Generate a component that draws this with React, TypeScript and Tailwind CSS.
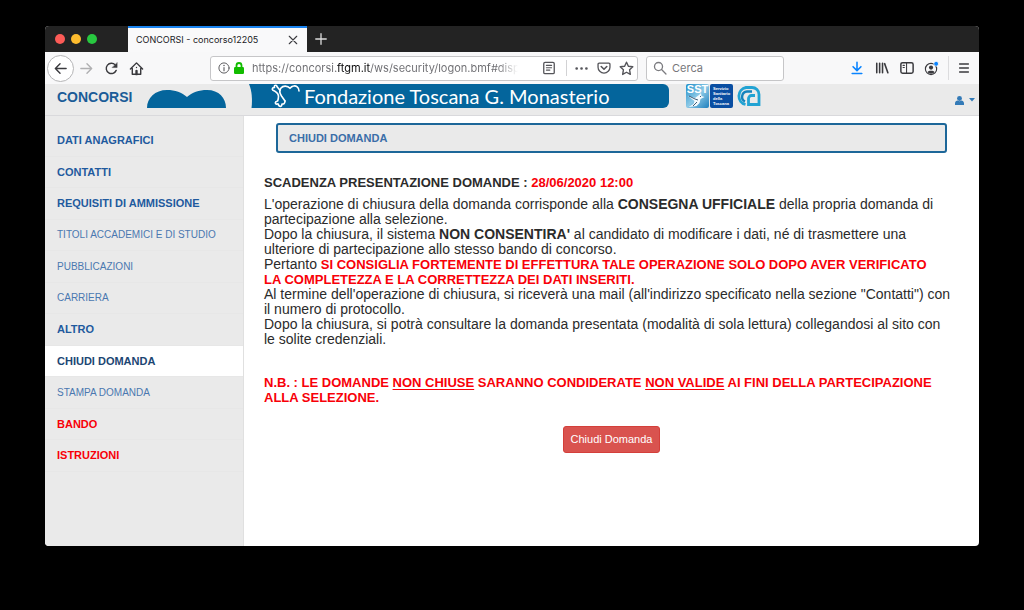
import type { ReactNode } from "react";

type MenuItem = {
  label: string;
  tone: "strong" | "plain" | "active" | "alert";
};

const MENU: MenuItem[] = [
  { label: "DATI ANAGRAFICI", tone: "strong" },
  { label: "CONTATTI", tone: "strong" },
  { label: "REQUISITI DI AMMISSIONE", tone: "strong" },
  { label: "TITOLI ACCADEMICI E DI STUDIO", tone: "plain" },
  { label: "PUBBLICAZIONI", tone: "plain" },
  { label: "CARRIERA", tone: "plain" },
  { label: "ALTRO", tone: "strong" },
  { label: "CHIUDI DOMANDA", tone: "active" },
  { label: "STAMPA DOMANDA", tone: "plain" },
  { label: "BANDO", tone: "alert" },
  { label: "ISTRUZIONI", tone: "alert" },
];

const TONES = {
  strong: "text-[11px] font-bold text-[#1f5a9e]",
  plain: "text-[10px] text-[#4a78b0]",
  active: "bg-white text-[11px] font-bold text-[#1c4673]",
  alert: "text-[11px] font-bold text-[#f80008]",
};

function Icon({ size = 16, children }: { size?: number; children: ReactNode }) {
  return (
    <svg
      width={size}
      height={size}
      viewBox="0 0 16 16"
      fill="none"
      stroke="currentColor"
      strokeWidth="1.5"
      strokeLinecap="round"
      strokeLinejoin="round"
      className="shrink-0"
      aria-hidden="true"
    >
      {children}
    </svg>
  );
}

function ToolButton({ label, children }: { label: string; children: ReactNode }) {
  return (
    <button aria-label={label} className="flex h-6 w-[25px] shrink-0 items-center justify-center">
      {children}
    </button>
  );
}

function TabBar() {
  return (
    <div className="flex h-[26px] bg-[#232323]">
      <div className="flex w-[83px] items-center gap-[6px] pl-[10px]">
        <span className="size-[10px] rounded-full bg-[#fc5b57]" />
        <span className="size-[10px] rounded-full bg-[#fdbc2e]" />
        <span className="size-[10px] rounded-full bg-[#28c840]" />
      </div>
      <div className="flex w-[179px] items-center justify-between border-t-2 border-[#1a84f0] bg-[#f9f9fa] pr-[8px] pl-[8px] font-['Inter',sans-serif] text-[9px] text-[#1a1a1e]">
        <span>CONCORSI - concorso12205</span>
        <button aria-label="Chiudi scheda" className="flex text-[#3c3c40]">
          <Icon size={12}>
            <path d="M3 3l10 10M13 3L3 13" />
          </Icon>
        </button>
      </div>
      <button aria-label="Nuova scheda" className="flex w-[27px] items-center justify-center text-[#dcdcdc]">
        <Icon size={14}>
          <path d="M8 2v12M2 8h12" />
        </Icon>
      </button>
    </div>
  );
}

function Toolbar() {
  return (
    <div className="flex h-8 items-center bg-[#f8f8f9] pl-[2px] font-['Inter',sans-serif] text-[#3a3a3e]">
      <button
        aria-label="Indietro"
        className="flex size-[27px] shrink-0 items-center justify-center rounded-full border border-[#b5b5b7] bg-white"
      >
        <Icon size={15}>
          <path d="M14 8H2.500M7.500 3L2.500 8l5 5" />
        </Icon>
      </button>
      <button aria-label="Avanti" className="flex h-6 w-[25px] shrink-0 items-center justify-center text-[#b0b0b2]">
        <Icon size={15}>
          <path d="M2 8h11.500M8.500 3l5 5-5 5" />
        </Icon>
      </button>
      <ToolButton label="Ricarica">
        <Icon size={15}>
          <path d="M13 10a5.500 5.500 0 1 1-1-5.800" />
          <path d="M14 2v5H9z" fill="currentColor" strokeWidth="0.5" />
        </Icon>
      </ToolButton>
      <ToolButton label="Pagina iniziale">
        <Icon size={15}>
          <path d="M1.500 8.500L8 2l6.500 6.500M3.500 8v6.200h9V8" />
          <path d="M8 14v-3.500" strokeWidth="2.500" />
          <path d="M8 6.800v.2" strokeWidth="1.500" />
        </Icon>
      </ToolButton>

      <div className="ml-[61px] flex h-[25px] min-w-0 flex-1 items-center rounded-[3px] border border-[#c6c6c8] bg-white">
        <span className="flex items-center gap-[4px] pl-[7px] text-[#5b5b5f]">
          <Icon size={12}>
            <circle cx="8" cy="8" r="6.800" strokeWidth="1.300" />
            <path d="M8 7.500v4" />
            <path d="M8 4.600v.1" strokeWidth="2" />
          </Icon>
          <svg width="10" height="12" viewBox="0 0 10 12" fill="none" aria-hidden="true">
            <path d="M2.500 6V3.500a2.500 2.500 0 0 1 5 0V6" stroke="#12bc00" strokeWidth="1.800" />
            <rect y="5" width="10" height="7" rx="1.200" fill="#12bc00" />
          </svg>
        </span>
        <input
          aria-label="Indirizzo"
          readOnly
          value="https://concorsi.ftgm.it/ws/security/logon.bmf#display"
          className="ml-[8px] w-[266px] bg-[linear-gradient(90deg,#6c6c70_84px,#0c0c0d_84px,#0c0c0d_118px,#6c6c70_118px,#6c6c70_245px,transparent_266px)] bg-clip-text text-[11px] text-transparent outline-none"
        />
        <span className="ml-auto flex items-center text-[#55555a]">
          <Icon size={14}>
            <rect x="2" y="1.500" width="12" height="13" rx="1.500" />
            <path d="M5 5h6M5 7.700h6M5 10.400h4" strokeWidth="1.200" />
          </Icon>
          <span className="mr-[8px] ml-[10px] h-4 w-px bg-[#d2d2d4]" />
          <button aria-label="Azioni pagina" className="flex">
            <Icon size={13}>
              <path d="M2 8h.1M8 8h.1M14 8h.1" strokeWidth="3.200" />
            </Icon>
          </button>
          <button aria-label="Salva in Pocket" className="ml-[9px] flex">
            <Icon size={14}>
              <path d="M2.500 2.500h11a1.300 1.300 0 0 1 1.300 1.300V7a6.800 6.800 0 0 1-13.600 0V3.800a1.300 1.300 0 0 1 1.300-1.300z" />
              <path d="M4.800 6.300L8 9.400l3.200-3.100" strokeWidth="1.800" />
            </Icon>
          </button>
          <button aria-label="Aggiungi ai segnalibri" className="mr-[3px] ml-[8px] flex">
            <Icon size={15}>
              <path d="M8 1.300l2 4.300 4.700.6-3.400 3.200.8 4.900L8 12l-4.100 2.300.8-4.900L1.300 6.200 6 5.600z" />
            </Icon>
          </button>
        </span>
      </div>

      <label className="ml-[8px] flex h-[25px] w-[138px] shrink-0 items-center rounded-[3px] border border-[#c6c6c8] bg-white pl-[6px] text-[#7b7b7f]">
        <Icon size={14}>
          <circle cx="6.300" cy="6.300" r="4.600" />
          <path d="M9.800 9.800l5 5" />
        </Icon>
        <input
          aria-label="Cerca"
          placeholder="Cerca"
          className="ml-[5px] w-full min-w-0 text-[11px] outline-none placeholder:text-[#77777b]"
        />
      </label>

      <div className="ml-[60px] flex shrink-0 items-center">
        <button aria-label="Download" className="flex h-6 w-[25px] items-center justify-center text-[#0a84ff]">
          <Icon size={14}>
            <path d="M8 1.500v9M3.500 6.500L8 11l4.500-4.500M2.500 14.300h11" strokeWidth="1.800" />
          </Icon>
        </button>
        <ToolButton label="Libreria">
          <Icon size={14}>
            <path d="M2 2.500v11M5.300 2.500v11M8.600 2.500v11M11 3l3.700 10.500" strokeWidth="1.800" />
          </Icon>
        </ToolButton>
        <ToolButton label="Barra laterale">
          <Icon size={14}>
            <rect x="1" y="2" width="14" height="12" rx="2" strokeWidth="1.700" />
            <path d="M7.500 2v12M3.500 5h1.500M3.500 7.500h1.500" strokeWidth="1.200" />
          </Icon>
        </ToolButton>
        <ToolButton label="Account">
          <Icon size={15}>
            <circle cx="7.500" cy="8.500" r="6" strokeWidth="1.200" />
            <circle cx="7.500" cy="7" r="2.200" fill="currentColor" stroke="none" />
            <path d="M3.800 11.800c.8-2 6.600-2 7.400 0-1.500 2.300-5.900 2.300-7.400 0z" fill="currentColor" stroke="none" />
            <circle cx="13" cy="3" r="2.600" fill="#0a84ff" stroke="#f8f8f9" strokeWidth="0.800" />
          </Icon>
        </ToolButton>
        <span className="ml-[4px] h-6 w-px bg-[#dcdcde]" />
        <button aria-label="Menu" className="flex h-6 w-[30px] items-center justify-center">
          <Icon size={14}>
            <path d="M3 3.500h10M3 8h10M3 12.500h10" strokeWidth="1.700" />
          </Icon>
        </button>
      </div>
    </div>
  );
}

function Banner() {
  return (
    <div className="ml-[22px] flex h-6 w-[420px] items-center overflow-hidden rounded-r-[6px] bg-[#04659c]">
      {/* curved left edge */}
      <svg width="6" height="24" viewBox="0 0 6 24" className="shrink-0" aria-hidden="true">
        <path d="M0 0c3 7 3.500 16 2.500 24H0z" fill="#eaeaea" />
      </svg>
      <svg
        width="32"
        height="24"
        viewBox="0 0 32 24"
        fill="none"
        stroke="#fff"
        strokeWidth="1.600"
        strokeLinejoin="round"
        strokeLinecap="round"
        className="ml-[14px] shrink-0"
        aria-hidden="true"
      >
        {/* heart outline, open on the right */}
        <path d="M30 7c0-4-3-5.500-5.500-5-1.700.3-2.700 1.300-3.500 2.300C18.500 1.500 14 1.500 12 4c-1.800 2.300-1.500 5 .5 8l3.500 5" />
        {/* winged figure */}
        <path d="M11 6.500C10 4.500 8 3.500 7.500 1.500 5.500.8 5 2 5.500 3.500 3.500 3.300 2.500 5 4 6.300c3 1.200 5 2.700 5.500 5.700 0 2-.3 3.500-.8 5-1.700.3-2.700 1.300-2.200 2.500.8 1 2 .5 2.500.3.500 1.700 1 2.700 2.500 2.700 1.500-.3 1.300-1.500 1.500-2.500 1.500.3 3-.5 3-3" />
      </svg>
      <span className="ml-[3px] font-['Lato',sans-serif] text-[20px] leading-6 whitespace-nowrap text-white">
        Fondazione Toscana G. Monasterio
      </span>
    </div>
  );
}

function PartnerLogos() {
  return (
    <div className="ml-[17px] flex shrink-0 items-center">
      <svg width="23" height="24" viewBox="0 0 23 24" aria-hidden="true">
        <defs>
          <linearGradient id="sky" x1="0" x2="1" y1="0" y2="1">
            <stop offset="0" stopColor="#1d8cc8" />
            <stop offset="0.500" stopColor="#8cc9e6" />
            <stop offset="1" stopColor="#1f7fbd" />
          </linearGradient>
        </defs>
        <rect width="23" height="24" rx="2" fill="url(#sky)" />
        <text x="11.500" y="8.500" fontSize="11" fontWeight="bold" fill="#fff" textAnchor="middle" fontFamily="Liberation Sans">
          SST
        </text>
        <path d="M2 12l7 2 4-3 2-2 .5 3 3 1-4 2-1 4-3 3-8 1 5-3 1-3z" fill="#f4fafd" />
        <path d="M3 12l6 3 3 1M14 12l1 1M11 18l-4 4" stroke="#2b4a66" strokeWidth="0.900" fill="none" />
      </svg>
      <div className="ml-px flex h-6 w-[23px] flex-col justify-center overflow-hidden rounded-[2px] bg-[#0a4ea2] pl-[3px] font-['Liberation_Sans',sans-serif] text-[4px] leading-[5px] font-bold text-white">
        <span>Servizio</span>
        <span>Sanitario</span>
        <span>della</span>
        <span>Toscana</span>
      </div>
      <svg width="25" height="22" viewBox="0 0 25 22" fill="none" className="ml-[3px]" aria-hidden="true">
        <path
          d="M9.500 19.500A8.700 8.700 0 0 1 10 2.500h6a7 7 0 0 1 7 7V19.500H12.500V13.500a3 3 0 0 1 3-3h3.500"
          stroke="#22a3d3"
          strokeWidth="2.800"
        />
        <path d="M9 16.500A5.300 5.300 0 0 1 11 6.500h5" stroke="#1583bd" strokeWidth="2.400" />
      </svg>
    </div>
  );
}

function SiteHeader() {
  return (
    <header className="flex h-8 items-start border-b border-[#d9d9dc] bg-[#eaeaea] pl-[12px]">
      <a href="#home" className="w-[90px] shrink-0 text-[14px] leading-[26px] font-bold text-[#1b5c98]">
        CONCORSI
      </a>
      <svg width="80" height="24" viewBox="0 0 80 24" className="shrink-0" aria-hidden="true">
        <path
          d="M0 24C0 14 8 6 20 6c8 0 15 2.500 20 7C45 8.500 52 6 60 6c12 0 19 8 19 18z"
          fill="#04659c"
        />
      </svg>
      <Banner />
      <PartnerLogos />
      <button aria-label="Utente" className="mt-[8px] mr-[4px] ml-auto flex h-4 items-center gap-[5px] text-[#337ab7]">
        <svg width="9" height="9" viewBox="0 0 10 10" fill="currentColor" aria-hidden="true">
          <circle cx="5" cy="2.800" r="2.700" />
          <path d="M0 10V8c0-1.700 1.500-2.800 3-3 1.200 1 2.800 1 4 0 1.500.2 3 1.300 3 3v2z" />
        </svg>
        <svg width="6" height="4" viewBox="0 0 6 4" fill="currentColor" aria-hidden="true">
          <path d="M0 0h6L3 3.500z" />
        </svg>
      </button>
    </header>
  );
}

function Sidebar() {
  return (
    <nav className="w-[199px] shrink-0 border-r border-[#e0e0e0] bg-[#eaeaea] pt-[9px]">
      <ul className="grid h-[347px] auto-rows-fr">
        {MENU.map((item) => (
          <li key={item.label} className="flex border-b border-[#e7e7e7]">
            <a href="#menu" className={`flex flex-1 items-center pl-[12px] ${TONES[item.tone]}`}>
              {item.label}
            </a>
          </li>
        ))}
      </ul>
    </nav>
  );
}

export default function App() {
  return (
    <div className="min-h-screen bg-black px-[45px] pt-[26px] pb-[64px] font-['Liberation_Sans',sans-serif]">
      <div className="overflow-hidden rounded-[4px] bg-white">
        <TabBar />
        <Toolbar />
        <SiteHeader />
        <div className="flex min-h-[430px]">
          <Sidebar />
          <main className="min-w-0 flex-1 px-5 pt-[7px] text-[14px] leading-[15px] text-[#2b2b2b]">
            <h1 className="mx-3 flex h-[30px] items-center rounded-[3px] border-2 border-[#1d6799] bg-[#eaeaea] pl-[11px] text-[11px] font-bold text-[#3a6ea8]">
              CHIUDI DOMANDA
            </h1>
            <h2 className="mt-[22px] text-[13px] font-bold">
              SCADENZA PRESENTAZIONE DOMANDE : <span className="text-[#f80008]">28/06/2020 12:00</span>
            </h2>
            <p className="mt-[7px]">
              L'operazione di chiusura della domanda corrisponde alla <b>CONSEGNA UFFICIALE</b> della propria domanda di
              partecipazione alla selezione.
            </p>
            <p>
              Dopo la chiusura, il sistema <b>NON CONSENTIRA'</b> al candidato di modificare i dati, né di trasmettere
              una
              <br />
              ulteriore di partecipazione allo stesso bando di concorso.
            </p>
            <p>
              Pertanto{" "}
              <b className="text-[13px] text-[#f80008]">
                SI CONSIGLIA FORTEMENTE DI EFFETTURA TALE OPERAZIONE SOLO DOPO AVER VERIFICATO
                <br />
                LA COMPLETEZZA E LA CORRETTEZZA DEI DATI INSERITI.
              </b>
            </p>
            <p>
              Al termine dell'operazione di chiusura, si riceverà una mail (all'indirizzo specificato nella sezione
              "Contatti") con il numero di protocollo.
            </p>
            <p>
              Dopo la chiusura, si potrà consultare la domanda presentata (modalità di sola lettura) collegandosi al sito
              con
              <br />
              le solite credenziali.
            </p>
            <p className="mt-[28px] text-[13px] font-bold text-[#f80008]">
              N.B. : LE DOMANDE <u className="decoration-1 underline-offset-2">NON CHIUSE</u> SARANNO CONDIDERATE{" "}
              <u className="decoration-1 underline-offset-2">NON VALIDE</u> AI FINI DELLA PARTECIPAZIONE
              <br />
              ALLA SELEZIONE.
            </p>
            <div className="mt-[21px] flex justify-center">
              <button className="h-[27px] rounded-[3px] border border-[#d43f3a] bg-[#d9534f] px-[7px] text-[11px] text-white">
                Chiudi Domanda
              </button>
            </div>
          </main>
        </div>
      </div>
    </div>
  );
}
